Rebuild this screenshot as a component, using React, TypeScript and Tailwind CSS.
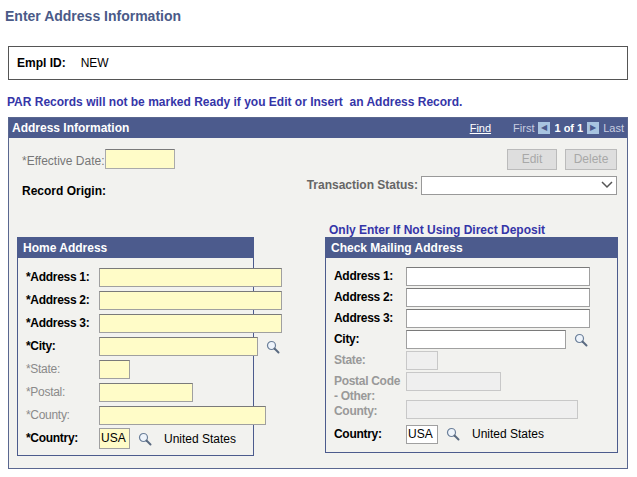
const font = { fontFamily: '"Liberation Sans", Arial, sans-serif' };

function Mag() {
  return (
    <svg width="14" height="14" viewBox="0 0 14 14" className="shrink-0">
      <circle cx="5.5" cy="5.5" r="4" fill="#eef4fb" stroke="#6b7f99" strokeWidth="1.2" />
      <path d="M8.5 8.5 L12.5 12.5" stroke="#5a6a80" strokeWidth="2" strokeLinecap="round" />
    </svg>
  );
}

function Field({ w, bg = "bg-[#fffcc8]", dis = false }: { w: string; bg?: string; dis?: boolean }) {
  return (
    <div
      className={`${w} shrink-0 h-[19px] border ${
        dis ? "border-[#c8c8c8] bg-[#efefef]" : `border-[#a0a0a0] border-t-[#7a7a7a] ${bg}`
      }`}
    />
  );
}

function Row({
  label,
  h = "h-[23px]",
  lw,
  cls = "font-bold text-black",
  children,
}: {
  label: React.ReactNode;
  h?: string;
  lw: string;
  cls?: string;
  children: React.ReactNode;
}) {
  return (
    <div className={`flex items-center ${h}`}>
      <div className={`${lw} shrink-0 whitespace-nowrap text-[12px] leading-[13px] tracking-[-0.3px] ${cls}`}>{label}</div>
      <div className="flex items-center gap-2">{children}</div>
    </div>
  );
}

export default function App() {
  const gray = "font-normal text-[#8a8a8a]";
  return (
    <div className="w-[637px] h-[477px] bg-white text-[12px]" style={font}>
      <div className="pl-[5px] pt-[6px] h-[46px] text-[14px] font-bold text-[#4a5a88]">
        Enter Address Information
      </div>
      <div className="mx-[8px] w-[620px] h-[34px] border border-[#555] flex items-center pl-[8px] gap-[15px]">
        <span className="font-bold text-[12px]">Empl ID:</span>
        <span>NEW</span>
      </div>
      <div className="pl-[7px] pt-[13px] h-[37px] font-bold text-[#3535a8]">
        PAR Records will not be marked Ready if you Edit or Insert&nbsp; an Address Record.
      </div>
      <div className="mx-[8px] w-[620px] h-[352px] border border-[#5a6790] bg-[#f2f2ef]">
        <div className="h-[20px] bg-[#4c5b8d] flex items-center px-[3px] text-white">
          <span className="font-bold">Address Information</span>
          <span className="ml-auto underline text-[11px] mr-[22px]">Find</span>
          <span className="text-[#c8cde0] text-[11px]">First</span>
          <span className="w-[12px] h-[12px] bg-[#a8c4e0] ml-[4px] mr-[4px] text-[8px] leading-[12px] text-center text-[#4c5b8d]">◀</span>
          <span className="font-bold text-[11px]">1 of 1</span>
          <span className="w-[12px] h-[12px] bg-[#a8c4e0] ml-[4px] mr-[4px] text-[8px] leading-[12px] text-center text-[#4c5b8d]">▶</span>
          <span className="text-[#c8cde0] text-[11px]">Last</span>
        </div>
        <div className="flex items-start pt-[11px] px-[13px] h-[37px]">
          <span className="text-[#777] mt-[3px]">*Effective Date:</span>
          <div className="w-[70px] h-[20px] border border-[#aaa] border-t-[#7a7a7a] bg-[#fffcc8]" />
          <div className="ml-auto flex gap-[8px] mr-[-3px]">
            <div className="w-[50px] h-[21px] border border-[#bbb] bg-[#dedede] text-[#a8a8a8] text-center leading-[19px]">Edit</div>
            <div className="w-[52px] h-[21px] border border-[#bbb] bg-[#dedede] text-[#a8a8a8] text-center leading-[19px]">Delete</div>
          </div>
        </div>
        <div className="flex items-center px-[13px] h-[20px]">
          <span className="font-bold mt-[12px]">Record Origin:</span>
          <span className="ml-auto text-[#666] font-bold mr-[3px]">Transaction Status:</span>
          <div className="w-[196px] h-[19px] border border-[#999] bg-white flex justify-end items-center pr-[3px] mr-[-3px]">
            <svg width="12" height="8" viewBox="0 0 12 8"><path d="M1 1 L6 6 L11 1" stroke="#555" strokeWidth="1.5" fill="none" /></svg>
          </div>
        </div>
        <div className="flex pl-[8px] pr-[9px] mt-[26px] justify-between">
          <div className="w-[237px] mt-[16px] h-[219px] border border-[#4c5b8d] bg-[#f2f2ef]">
            <div className="h-[20px] bg-[#4c5b8d] text-white font-bold pl-[5px] leading-[20px]">Home Address</div>
            <div className="pt-[8px] pl-[8px]">
              <Row label="*Address 1:" lw="w-[73px]"><Field w="w-[183px]" /></Row>
              <Row label="*Address 2:" lw="w-[73px]"><Field w="w-[183px]" /></Row>
              <Row label="*Address 3:" lw="w-[73px]"><Field w="w-[183px]" /></Row>
              <Row label="*City:" lw="w-[73px]"><Field w="w-[159px]" /><Mag /></Row>
              <Row label="*State:" lw="w-[73px]" cls={gray}><Field w="w-[31px]" /></Row>
              <Row label="*Postal:" lw="w-[73px]" cls={gray}><Field w="w-[94px]" /></Row>
              <Row label="*County:" lw="w-[73px]" cls={gray}><Field w="w-[167px]" /></Row>
              <Row label="*Country:" lw="w-[73px]">
                <div className="w-[31px] h-[21px] border border-[#a0a0a0] bg-[#fffcc8] leading-[19px] pl-[1px]">USA</div>
                <Mag />
                <span className="ml-[4px]">United States</span>
              </Row>
            </div>
          </div>
          <div className="w-[293px]">
            <div className="h-[16px] text-[#3535a8] font-bold pl-[4px]">Only Enter If Not Using Direct Deposit</div>
            <div className="h-[216px] border border-[#4c5b8d] bg-[#f2f2ef]">
              <div className="h-[20px] bg-[#4c5b8d] text-white font-bold pl-[5px] leading-[20px]">Check Mailing Address</div>
              <div className="pt-[8px] pl-[8px]">
                <Row label="Address 1:" h="h-[21px]" lw="w-[72px]"><Field w="w-[184px]" bg="bg-white" /></Row>
                <Row label="Address 2:" h="h-[21px]" lw="w-[72px]"><Field w="w-[184px]" bg="bg-white" /></Row>
                <Row label="Address 3:" h="h-[21px]" lw="w-[72px]"><Field w="w-[184px]" bg="bg-white" /></Row>
                <Row label="City:" h="h-[21px]" lw="w-[72px]"><Field w="w-[160px]" bg="bg-white" /><Mag /></Row>
                <Row label="State:" h="h-[21px]" lw="w-[72px]" cls="font-bold text-[#999]"><Field w="w-[32px]" dis /></Row>
                <div className="flex h-[52px]">
                  <div className="w-[72px] shrink-0 whitespace-nowrap text-[12px] leading-[15px] tracking-[-0.3px] font-bold text-[#999] pt-[3px]">Postal Code<br />- Other:<br />County:</div>
                  <div className="flex flex-col">
                    <div className="w-[95px] h-[19px] border border-[#c8c8c8] bg-[#efefef] mt-[1px]" />
                    <div className="w-[172px] h-[19px] border border-[#c8c8c8] bg-[#efefef] mt-[9px]" />
                  </div>
                </div>
                <Row label="Country:" h="h-[22px]" lw="w-[72px]">
                  <div className="w-[32px] h-[19px] border border-[#a0a0a0] bg-white leading-[17px] pl-[1px]">USA</div>
                  <Mag />
                  <span className="ml-[4px]">United States</span>
                </Row>
              </div>
            </div>
          </div>
        </div>
      </div>
    </div>
  );
}
